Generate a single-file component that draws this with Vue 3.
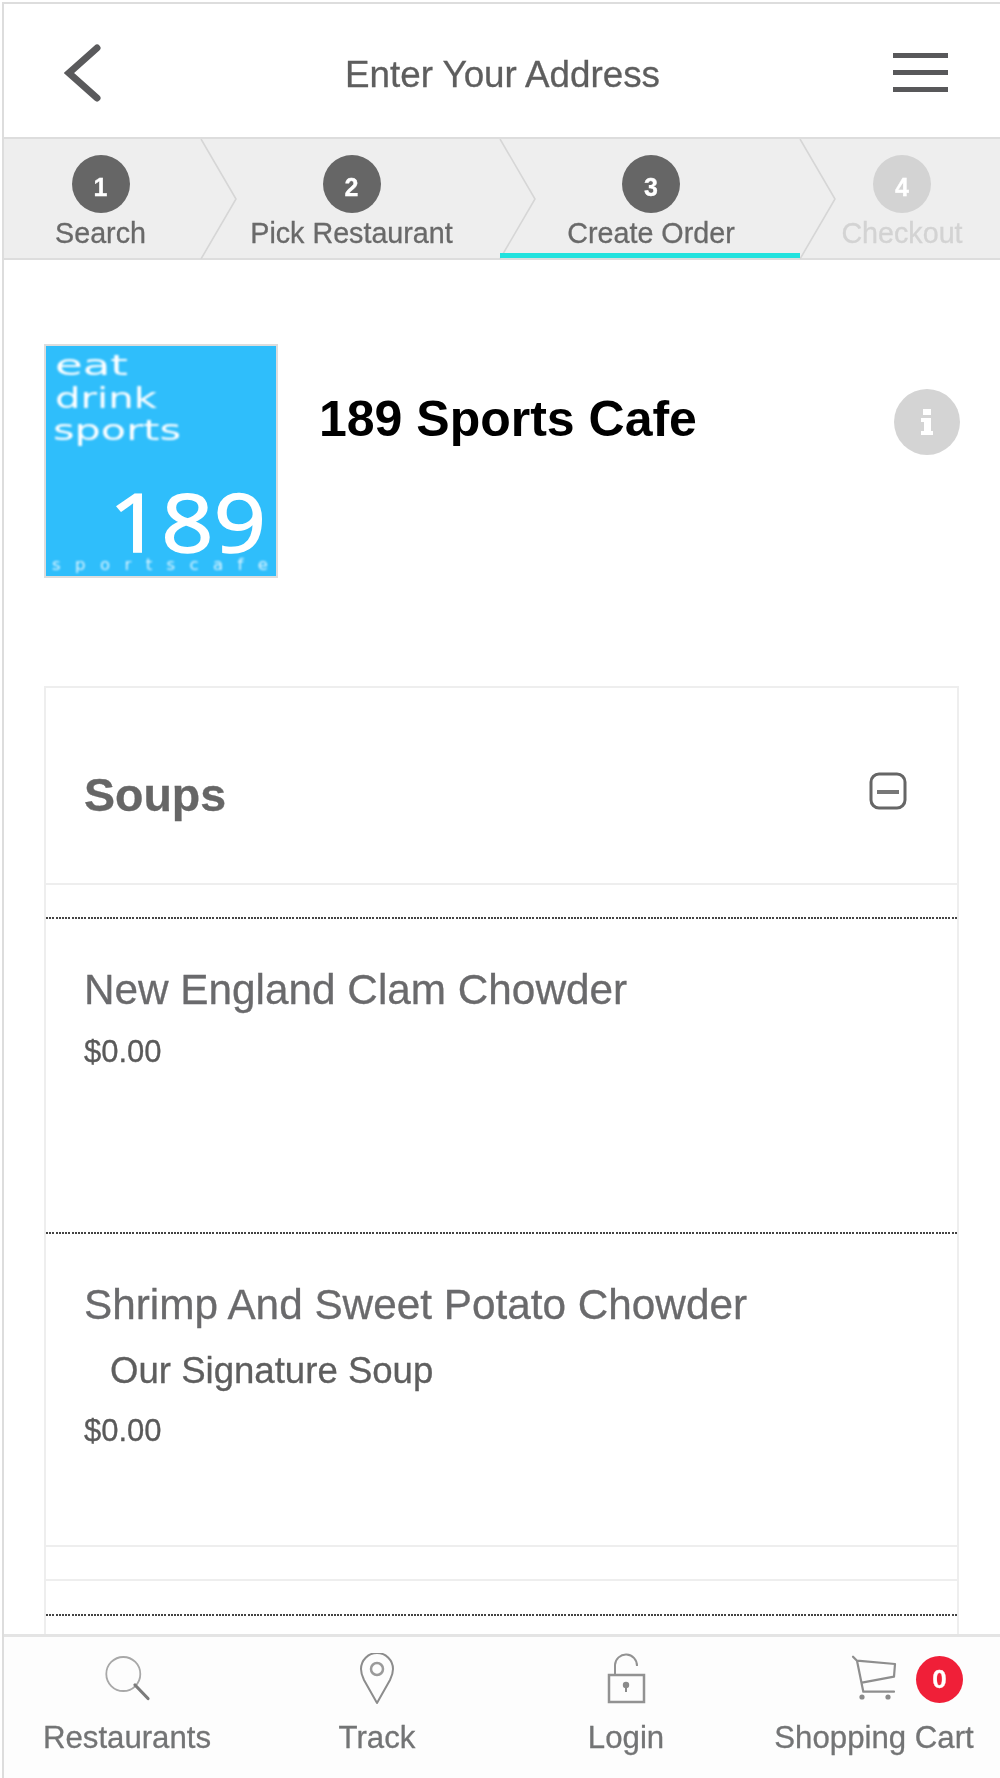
<script setup>
const steps = [
  { n: 1, label: 'Search', state: 'done' },
  { n: 2, label: 'Pick Restaurant', state: 'done' },
  { n: 3, label: 'Create Order', state: 'active' },
  { n: 4, label: 'Checkout', state: 'todo' },
]
</script>

<template>
  <div class="frame">
    <header class="topbar">
      <button class="back" aria-label="Back">
        <svg width="40" height="64" viewBox="0 0 40 64"><path d="M33 7 L5 32 L33 57" fill="none" stroke="#5a5a5c" stroke-width="7" stroke-linecap="round" stroke-linejoin="miter"/></svg>
      </button>
      <h1 class="page-title">Enter Your Address</h1>
      <div class="burger"><i></i><i></i><i></i></div>
    </header>

    <nav class="steps">
      <div v-for="s in steps" :key="s.n" class="step" :class="s.state">
        <span class="num">{{ s.n }}</span>
        <span class="label">{{ s.label }}</span>
        <svg v-if="s.n < 4" class="chev" width="38" height="120" viewBox="0 0 38 120"><path d="M1 0 L36 60 L1 120" fill="none" stroke="#d6d6d6" stroke-width="1.6"/></svg>
      </div>
    </nav>

    <main class="main">
      <section class="restaurant">
        <div class="logo">
          <svg width="230" height="230" viewBox="0 0 230 230">
            <g class="logo-soft" fill="#fff" font-family="'DejaVu Sans', sans-serif" font-size="29">
              <text x="9" y="29" textLength="73" lengthAdjust="spacingAndGlyphs">eat</text>
              <text x="9" y="62" textLength="102" lengthAdjust="spacingAndGlyphs">drink</text>
              <text x="7" y="94" textLength="128" lengthAdjust="spacingAndGlyphs">sports</text>
            </g>
            <text class="logo-sharp" x="63" y="206" fill="#fff" stroke="#fff" stroke-width="1.5" font-family="'Open Sans', sans-serif" font-size="80" textLength="157" lengthAdjust="spacingAndGlyphs">189</text>
            <text class="logo-soft" x="6" y="224" fill="#fff" opacity=".85" font-family="'DejaVu Sans', sans-serif" font-size="16.5" textLength="216">sportscafe</text>
          </svg>
        </div>
        <h2 class="name">189 Sports Cafe</h2>
        <div class="info">
          <svg width="20" height="30" viewBox="0 0 20 30"><path d="M6 2h8v6H6z M4 11h10v13h2v4H4v-4h3v-9H4z" fill="#fff"/></svg>
        </div>
      </section>

      <section class="card">
        <div class="card-head">
          <h3>Soups</h3>
          <svg width="40" height="40" viewBox="0 0 40 40"><rect x="3" y="3" width="34" height="34" rx="8" fill="none" stroke="#666" stroke-width="3"/><path d="M9 21h22" stroke="#777" stroke-width="4"/></svg>
        </div>
        <div class="spacer"></div>
        <article class="item">
          <div class="item-name">New England Clam Chowder</div>
          <div class="price">$0.00</div>
        </article>
        <article class="item">
          <div class="item-name">Shrimp And Sweet Potato Chowder</div>
          <div class="desc">Our Signature Soup</div>
          <div class="price">$0.00</div>
        </article>
        <div class="gap"></div>
        <div class="gap2"></div>
        <article class="item"></article>
      </section>
    </main>

    <footer class="tabs">
      <div class="tab">
        <svg width="60" height="56" viewBox="0 0 60 56"><circle cx="26.3" cy="21" r="17" fill="none" stroke="#a8a8a8" stroke-width="1.8"/><path d="M38 32 L51 45.5" stroke="#7b7b7b" stroke-width="3.2" stroke-linecap="round"/></svg>
        <span>Restaurants</span>
      </div>
      <div class="tab">
        <svg width="60" height="56" viewBox="0 0 60 56"><path d="M30 50 L17 27 C15 23 14 20 14 16 A16 16 0 0 1 46 16 C46 20 45 23 43 27 Z" fill="none" stroke="#8c8c8c" stroke-width="2" stroke-linejoin="round"/><circle cx="30" cy="16" r="6" fill="none" stroke="#9a9a9a" stroke-width="2.5"/></svg>
        <span>Track</span>
      </div>
      <div class="tab">
        <svg width="60" height="56" viewBox="0 0 60 56"><rect x="13" y="22" width="35" height="27" fill="none" stroke="#929292" stroke-width="2.5"/><path d="M19 22 V12 A11 11 0 0 1 41 13" fill="none" stroke="#929292" stroke-width="2"/><circle cx="30" cy="32" r="3.2" fill="#8a8a8a"/><path d="M30 33v6" stroke="#8a8a8a" stroke-width="2"/></svg>
        <span>Login</span>
      </div>
      <div class="tab">
        <svg width="60" height="56" viewBox="-8 -3 60 56"><path d="M1 .7 L5 4.7 L11.3 35.7 L42 35.7 M5 4.7 L43 8 L42 20.7 L10 26.7" fill="none" stroke="#8e8e8e" stroke-width="2.2" stroke-linecap="round" stroke-linejoin="round"/><circle cx="10" cy="41" r="2.6" fill="#8a8a8a"/><circle cx="36" cy="41" r="2.6" fill="#8a8a8a"/></svg>
        <b class="badge">0</b>
        <span>Shopping Cart</span>
      </div>
    </footer>
  </div>
</template>

<style>
html, body { margin: 0; background: #fff; }
</style>

<style scoped>
.frame {
  box-sizing: border-box;
  width: 998px;
  height: 1776px;
  margin: 2px 0 0 2px;
  border-top: 2px solid #ddd;
  border-left: 2px solid #ddd;
  display: flex;
  flex-direction: column;
  overflow: hidden;
  font-family: "Liberation Sans", Arial, sans-serif;
  color: #666;
  filter: blur(0.5px);
  -webkit-text-stroke: 0.3px;
}
.topbar {
  flex: 0 0 133px;
  display: flex;
  align-items: center;
  justify-content: space-between;
  padding: 0 52px 0 60px;
  background: #fff;
}
.back {
  width: 40px;
  padding: 0;
  border: 0;
  background: none;
  display: flex;
  margin-top: 4px;
}
.page-title {
  margin: 8px 0 0 8px;
  font-size: 36.8px;
  font-weight: 400;
  color: #5e5e5e;
  line-height: 42px;
}
.burger { width: 55px; display: flex; flex-direction: column; gap: 12px; margin-top: 4px; }
.burger i { display: block; height: 5px; background: #58585a; }

.steps {
  flex: 0 0 123px;
  box-sizing: border-box;
  display: grid;
  grid-template-columns: 197px 299px 300px 200px;
  background: #eee;
  border-top: 2px solid #ddd;
  border-bottom: 2px solid #ddd;
}
.step {
  position: relative;
  display: flex;
  flex-direction: column;
  align-items: center;
  padding: 16px 0 0 2px;
}
.step:first-child { padding: 16px 4px 0 0; }
.step:last-child { padding-left: 4px; }
.num {
  width: 58px;
  height: 58px;
  border-radius: 50%;
  background: #666;
  color: #fff;
  font-size: 25px;
  font-weight: 700;
  line-height: 64px;
  text-align: center;
}
.label {
  font-size: 28.7px;
  line-height: 40px;
  color: #696969;
  white-space: nowrap;
}
.todo .num { background: #d3d3d3; }
.todo .label { color: #d3d3d3; }
.active::after {
  content: "";
  position: absolute;
  left: 0;
  right: 0;
  bottom: 0;
  height: 5px;
  background: #22e2de;
}
.chev { position: absolute; top: 0; right: -37px; }

.main {
  flex: 1 1 0;
  min-height: 0;
  overflow: hidden;
  padding: 84px 41px 0 40px;
  background: #fff;
}
.restaurant {
  display: flex;
  align-items: flex-start;
}
.logo {
  box-sizing: border-box;
  flex: 0 0 234px;
  height: 234px;
  border: 2px solid #ddd;
  background: #2fbefb;
  overflow: hidden;
}
.logo svg { display: block; }
.logo text { -webkit-text-stroke: 0; }
.logo-soft { filter: blur(0.9px); }
.logo-sharp { filter: blur(0.6px); }
.name {
  margin: 46px 0 0 41px;
  flex: 1;
  font-size: 50px;
  line-height: 58px;
  font-weight: 700;
  color: #000;
  -webkit-text-stroke: 0;
}
.info {
  flex: 0 0 66px;
  height: 66px;
  margin: 45px -1px 0 0;
  border-radius: 50%;
  background: #d4d4d4;
  display: flex;
  align-items: center;
  justify-content: center;
}

.card {
  margin-top: 108px;
  border: 2px solid #eee;
  border-bottom: 0;
}
.card-head {
  box-sizing: border-box;
  height: 197px;
  padding: 0 49px 0 38px;
  display: flex;
  align-items: center;
  justify-content: space-between;
  border-bottom: 2px solid #eee;
}
.card-head h3 {
  margin: 18px 0 0;
  font-size: 46.5px;
  font-weight: 700;
  color: #666;
}
.card-head svg { margin-top: 10px; }
.spacer { height: 32px; }
.item {
  box-sizing: border-box;
  height: 315px;
  padding: 46px 38px 0;
  background-image: repeating-linear-gradient(90deg, #444 0 2px, transparent 2px 3.2px);
  background-size: 100% 2px;
  background-repeat: no-repeat;
  background-position: top left;
}
.item + .item { height: 313px; }
.item-name {
  font-size: 42.3px;
  line-height: 54px;
  color: #6a6a6c;
}
.price {
  margin-top: 15px;
  font-size: 31px;
  line-height: 40px;
  color: #5a5a5a;
}
.desc {
  margin-top: 18px;
  padding-left: 26px;
  font-size: 36.6px;
  line-height: 42px;
  color: #5e5e5e;
}
.desc + .price { margin-top: 19px; }
.gap { height: 32px; border-top: 2px solid #eee; }
.gap2 { height: 33px; border-top: 2px solid #eee; }

.tabs {
  flex: 0 0 144px;
  box-sizing: border-box;
  display: grid;
  grid-template-columns: 246px 254px 244px 252px;
  border-top: 3px solid #e4e4e4;
  background: #fdfdfd;
}
.tab {
  position: relative;
  display: flex;
  flex-direction: column;
  align-items: center;
  padding-top: 16px;
  color: #737475;
  font-size: 31.2px;
  line-height: 40px;
}
.tab span { margin-top: 8.6px; white-space: nowrap; }
.badge {
  position: absolute;
  left: 168px;
  top: 19px;
  width: 47px;
  height: 47px;
  border-radius: 50%;
  background: #f01f38;
  color: #fff;
  font-size: 26px;
  line-height: 47px;
  text-align: center;
}
</style>
